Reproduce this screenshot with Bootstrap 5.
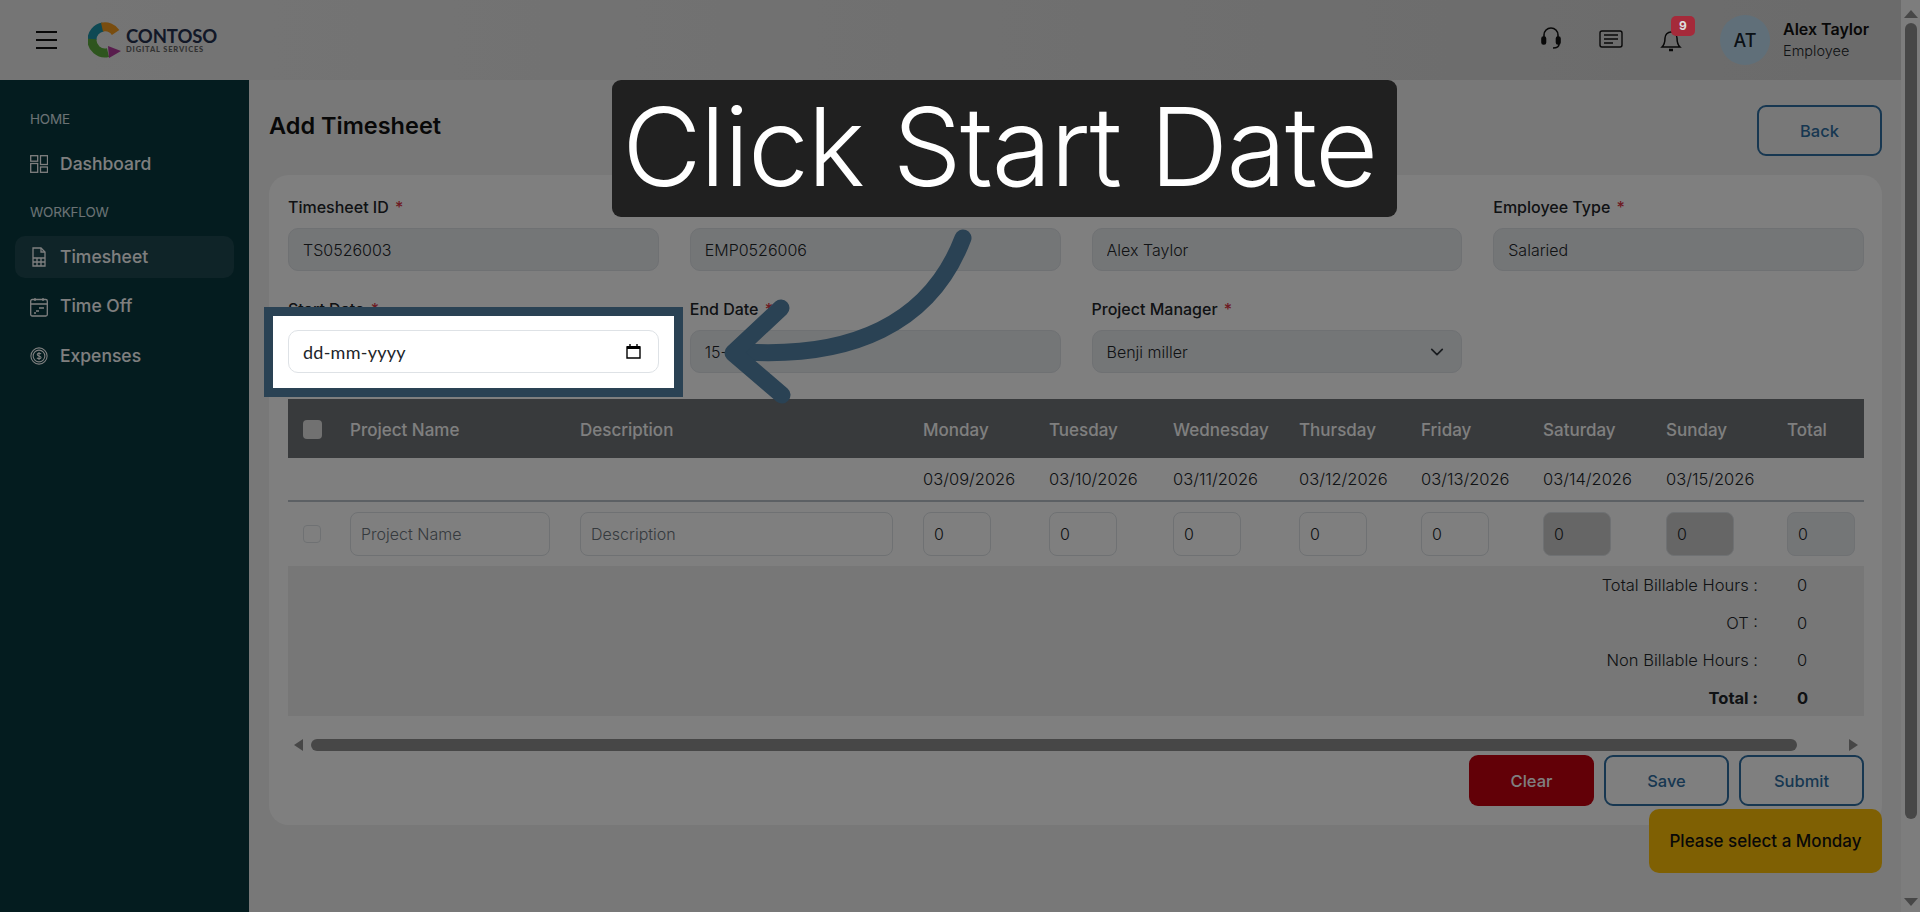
<!DOCTYPE html>
<html lang="en">
<head>
<meta charset="utf-8">
<title>Add Timesheet</title>
<link href="https://cdn.jsdelivr.net/npm/bootstrap@5.3.0/dist/css/bootstrap.min.css" rel="stylesheet">
<style>
html,body{height:912px;overflow:hidden}
body{font-family:"Inter","Noto Sans",sans-serif;font-size:16px;color:#212529;background:#f1f1f1}
.shell{height:912px}
.left-area{width:1901px;flex:none}
.page-scroll{width:19px;flex:none;background:#fafafa;padding-top:10px;padding-bottom:6px}
.tri-up{width:0;height:0;border-left:7px solid transparent;border-right:7px solid transparent;border-bottom:8px solid #8f8f8f}
.tri-down{width:0;height:0;border-left:7px solid transparent;border-right:7px solid transparent;border-top:8px solid #8f8f8f}
.tri-left{width:0;height:0;border-top:6px solid transparent;border-bottom:6px solid transparent;border-right:9px solid #8f8f8f}
.tri-right{width:0;height:0;border-top:6px solid transparent;border-bottom:6px solid transparent;border-left:9px solid #8f8f8f}
.v-thumb{width:12px;height:796px;margin-top:5px;background:#8f8f8f;border-radius:6px}
.topbar{height:80px;background:linear-gradient(90deg,#ebebeb,#d6d6d6);padding:0 0 0 36px}
.burger{width:21px;height:18px;border-top:2px solid #111;border-bottom:2px solid #111;position:relative;margin-right:31px}
.burger::after{content:"";position:absolute;left:0;right:0;top:6px;height:2px;background:#111}
.brand-main{font-family:"Lato",sans-serif;font-size:18.500px;font-weight:700;color:#24304f;line-height:18px;margin-top:1px;letter-spacing:-.1px}
.brand-sub{font-family:"Lato",sans-serif;font-size:7.500px;font-weight:900;color:#666;letter-spacing:.85px;line-height:10px}
.logo-mark{width:34px;height:36px;flex:none;margin-right:4px}
.tool-ico{width:30px;height:30px;color:#111;display:block}
.tool-gap{margin-left:30px}
.bell-badge{top:-9px;left:15px;background:#a52a3a;color:#ddd;font-size:12px;font-weight:700;width:24px;height:20px;border-radius:5px;line-height:20px;text-align:center;z-index:1041}
.avatar{width:50px;height:50px;flex:none;background:#c0dff3;color:#16222c;font-size:18px;font-weight:500;margin-left:34px}
.who{width:118px;margin-left:13px}
.who-name{font-size:16px;font-weight:600;line-height:22px;color:#111;margin-top:-1px}
.who-role{font-size:14.500px;line-height:22px;color:#212529;font-weight:300}
.side{width:249px;flex:none;background:#08383e;color:#fff;padding:20px 15px}
.side-head{font-size:13.500px;color:#d8e4e8;padding-left:15px;line-height:34px;margin:2px 0 7px;font-weight:400;text-transform:uppercase;letter-spacing:-.2px}
.side-link{display:flex;align-items:center;gap:12px;height:42px;padding-left:15px;margin-bottom:7.500px;color:#fff;text-decoration:none;font-size:17.500px;font-weight:500;border-radius:10px}
.side-link.before-group{margin-bottom:10px}
.side-link.is-on{background:#1e4850}
.side-link svg{width:18px;height:20px;flex:none}
.main-area{padding:0 19px 0 20px;position:relative;min-width:0}
.title-row{height:95px;padding-top:25px}
.page-title{font-size:23.500px;font-weight:600;color:#111;margin:7px 0 0}
.btn-line{width:125px;height:51px;border:2px solid #2f6fa3;color:#2f6fa3;background:transparent;border-radius:9px;font-size:16.500px;font-weight:500;padding:2px 0 0}
.btn-clear{width:125px;height:51px;border:0;background:#c4000f;color:#fff;border-radius:9px;font-size:16.500px;font-weight:500;padding:2px 0 0}
.sheet{background:#fff;border-radius:20px;padding:20px 18px 19px 19px;height:650px}
.field-row{--bs-gutter-x:31px;--bs-gutter-y:0}
.field{height:102px}
.f-label{display:block;font-size:16px;font-weight:500;line-height:22px;margin-top:1px;margin-bottom:10px;color:#212529}
.req{color:#dc3545;margin-left:2px}
.f-input{height:43px;border-radius:10px;border:1px solid #dee2e6;font-size:16px;font-weight:300;padding:0 14px;background-color:#fff;color:#212529}
.f-input[readonly]{background:#e9ecef;opacity:1}
.f-input::placeholder{color:#212529;opacity:1}
.cal-ico{position:absolute;right:18px;top:14px;width:15px;height:15px;z-index:1043;color:#000}
.f-select{height:43px;border-radius:10px;border:1px solid #dee2e6;font-size:16px;font-weight:300;padding:0 14px;background-color:#e9ecef;color:#212529;background-position:right 15px center;background-size:18px 14px}
.grid-table{table-layout:fixed;width:1576px;margin:0;border-collapse:collapse}
.grid-table th,.grid-table td{padding:0 0 0 8px;border:0;background:transparent;vertical-align:middle;font-size:16.500px;color:#212529;font-weight:300}
.grid-table thead tr:first-child th{background:#707478;color:#fff;height:59px;font-weight:500;font-size:17px;padding-top:4px}
.grid-table th{white-space:nowrap}
.date-row th{height:43px;border-bottom:2px solid #b9c0c8!important}
.entry-row td{height:65px;padding-top:0}
.box-check{width:18px;height:18px;border-radius:4px;border:1px solid #dee2e6;background:#fff;display:block;margin-left:7px}
.head-check{width:19px;height:19px;border-radius:4px;background:#e3e3e3;display:block;margin-left:7px;margin-top:-3px}
.cell-input{height:44px;border:1px solid #dee2e6;border-radius:8px;background:#fff;font-size:16px;font-weight:300;padding:0 10px;color:#212529;display:block}
.w-day{width:68px}.w-proj{width:200px}.w-desc{width:313px}
.cell-input::placeholder{color:#6c757d;opacity:1}
.off{background:#ccc}.lock{background:#e9ecef}
.summary{height:150px;background:#eee;padding-top:1px}
.sum-line{height:37.500px;display:grid;grid-template-columns:1fr 39px 67px;align-items:center;font-size:16.500px;font-weight:300;text-align:right}
.sum-line span:nth-child(1){grid-column:1}
.sum-line span:nth-child(2){grid-column:3;text-align:left}
.sum-strong{font-weight:700}
.hbar{height:18px;margin-top:20px;padding:0 6px}
.h-thumb{height:12px;width:1486px;margin-left:8px;background:#8f8f8f;border-radius:6px}
.actions{margin-top:1px;gap:10px}
.toast-warn{position:absolute;right:19px;top:729px;width:233px;height:64px;background:#ffc107;border-radius:10px;color:#111;font-size:17px;font-weight:500;padding-top:2px;z-index:5}
.dim{position:fixed;inset:0;background:rgba(0,0,0,.5);z-index:1040}
.frame{position:absolute;left:-24px;right:-24px;top:-23px;bottom:-24px;background:#fff;border:9.500px solid #2a4254;z-index:1041}
.date-wrap{position:relative}
.date-input{position:relative;z-index:1042;background:#fff;font-family:"Lato",sans-serif;font-size:18px;font-weight:400;letter-spacing:.25px}
.callout{position:fixed;left:612px;top:80px;width:785px;height:137px;background:#202020;border-radius:9px;color:#fff;font-family:"Inter",sans-serif;font-size:109px;font-weight:300;z-index:1045;white-space:nowrap;letter-spacing:-1.500px;padding:0 10px 3px 0}
.pointer{position:fixed;left:0;top:0;width:1920px;height:912px;z-index:1044;pointer-events:none}
</style>
</head>
<body>
<div class="shell d-flex">
  <div class="left-area d-flex flex-column">
    <header class="topbar d-flex align-items-center">
      <div class="burger"></div>
      <div class="d-flex align-items-center">
        <svg class="logo-mark" viewBox="0 0 34 36" fill="none" stroke-width="9"><path d="M4 18A13 13 0 0 1 15 5" stroke="#1c93a8"/><path d="M14 5.200A13 13 0 0 1 27.600 10.500" stroke="#f39a1f"/><path d="M4 17A13 13 0 0 0 20 30.600" stroke="#5cab3c"/><path d="M20 24L33 29L21 36Z" fill="#b23a9b"/></svg>
        <div>
          <div class="brand-main">CONTOSO</div>
          <div class="brand-sub">DIGITAL SERVICES</div>
        </div>
      </div>
      <div class="ms-auto d-flex align-items-center">
        <svg class="tool-ico" viewBox="0 2 30 30" fill="none" stroke="currentColor" stroke-width="1.600"><path d="M8 15v-3a7 7 0 0 1 14 0v3"/><rect x="6" y="14" width="3.500" height="7" rx="1.500" fill="currentColor"/><rect x="20.500" y="14" width="3.500" height="7" rx="1.500" fill="currentColor"/><path d="M23 21c0 3-2 4-6 4"/></svg>
        <svg class="tool-ico tool-gap" viewBox="0 1 30 30" fill="none" stroke="currentColor" stroke-width="1.400"><rect x="4" y="7" width="22" height="16" rx="2"/><path d="M8 11h14M8 15h14M8 19h9"/></svg>
        <div class="position-relative tool-gap">
          <svg class="tool-ico" viewBox="0 1 30 30" fill="none" stroke="currentColor" stroke-width="1.500"><path d="M6 23h18c-2.500-2.500-3-5-3-9a6 6 0 0 0-12 0c0 4-.5 6.500-3 9z"/><path d="M13 26h4" stroke-width="2.500"/></svg>
          <span class="bell-badge position-absolute">9</span>
        </div>
        <div class="avatar rounded-circle d-flex align-items-center justify-content-center">AT</div>
        <div class="who">
          <div class="who-name">Alex Taylor</div>
          <div class="who-role">Employee</div>
        </div>
      </div>
    </header>
    <div class="d-flex flex-grow-1">
      <aside class="side">
        <div class="side-head">Home</div>
        <a class="side-link before-group" href="#"><svg viewBox="0 0 18 18" fill="none" stroke="currentColor" stroke-width="1.300"><rect x=".7" y=".7" width="7" height="5.500"/><rect x=".7" y="8.500" width="7" height="8.800"/><rect x="10.500" y=".7" width="7" height="8.800"/><rect x="10.500" y="12" width="7" height="5.300"/></svg>Dashboard</a>
        <div class="side-head">Workflow</div>
        <a class="side-link is-on" href="#"><svg viewBox="0 0 18 20" fill="none" stroke="currentColor" stroke-width="1.300"><path d="M3 1h8l4 4v14H3z"/><path d="M11 1v4h4M3 11h12M3 15h12M7 11v8M11 11v8"/></svg>Timesheet</a>
        <a class="side-link" href="#"><svg viewBox="0 0 18 20" fill="none" stroke="currentColor" stroke-width="1.300"><rect x=".7" y="2.500" width="16.600" height="16.500" rx="1.500"/><path d="M.7 7h16.600M5 1v3M13 1v3M9 11h5M6 14h3M4 16h2"/></svg>Time Off</a>
        <a class="side-link" href="#"><svg viewBox="0 0 20 20" fill="none" stroke="currentColor" stroke-width="1.200"><circle cx="10" cy="10" r="9"/><circle cx="10" cy="10" r="6.500"/><path d="M12.300 7.800c-.6-1-3.800-1.300-4.300.3-.6 2.300 4.500 1.300 4.300 3.700-.2 1.500-3.600 1.500-4.600.2M10 5.500v9"/></svg>Expenses</a>
      </aside>
      <main class="main-area flex-grow-1">
        <div class="title-row d-flex justify-content-between align-items-start">
          <h1 class="page-title">Add Timesheet</h1>
          <button class="btn-line" type="button">Back</button>
        </div>
        <section class="sheet">
          <div class="row field-row">
            <div class="col-3 field"><label class="f-label">Timesheet ID <span class="req">*</span></label><input class="form-control f-input" readonly value="TS0526003"></div>
            <div class="col-3 field"><label class="f-label">Employee Code</label><input class="form-control f-input" readonly value="EMP0526006"></div>
            <div class="col-3 field"><label class="f-label">Employee Name</label><input class="form-control f-input" readonly value="Alex Taylor"></div>
            <div class="col-3 field"><label class="f-label">Employee Type <span class="req">*</span></label><input class="form-control f-input" readonly value="Salaried"></div>
            <div class="col-3 field"><label class="f-label">Start Date <span class="req">*</span></label>
              <div class="date-wrap"><div class="frame"></div><input class="form-control f-input date-input" type="text" placeholder="dd-mm-yyyy"><svg class="cal-ico" viewBox="0 0 15 15" fill="none" stroke="currentColor"><path d="M1 3h13v11H1z" stroke-width="1.400"/><path d="M1 3.500h13" stroke-width="3"/><path d="M4 0v3M11 0v3" stroke-width="1.400"/></svg></div></div>
            <div class="col-3 field"><label class="f-label">End Date <span class="req">*</span></label><input class="form-control f-input" readonly value="15-03-2026"></div>
            <div class="col-3 field"><label class="f-label">Project Manager <span class="req">*</span></label><select class="form-select f-select" disabled><option>Benji miller</option></select></div>
            <div class="col-3 field"></div>
          </div>
          <table class="table grid-table">
            <colgroup><col style="width:54px"><col style="width:230px"><col style="width:343px"><col style="width:126px"><col style="width:124px"><col style="width:126px"><col style="width:122px"><col style="width:122px"><col style="width:123px"><col style="width:121px"><col style="width:85px"></colgroup>
            <thead>
              <tr><th><span class="head-check"></span></th><th>Project Name</th><th>Description</th><th>Monday</th><th>Tuesday</th><th>Wednesday</th><th>Thursday</th><th>Friday</th><th>Saturday</th><th>Sunday</th><th>Total</th></tr>
              <tr class="date-row"><th></th><th></th><th></th><th>03/09/2026</th><th>03/10/2026</th><th>03/11/2026</th><th>03/12/2026</th><th>03/13/2026</th><th>03/14/2026</th><th>03/15/2026</th><th></th></tr>
            </thead>
            <tbody>
              <tr class="entry-row">
                <td><span class="box-check"></span></td>
                <td><input class="cell-input w-proj" placeholder="Project Name"></td>
                <td><input class="cell-input w-desc" placeholder="Description"></td>
                <td><input class="cell-input w-day" value="0"></td>
                <td><input class="cell-input w-day" value="0"></td>
                <td><input class="cell-input w-day" value="0"></td>
                <td><input class="cell-input w-day" value="0"></td>
                <td><input class="cell-input w-day" value="0"></td>
                <td><input class="cell-input w-day off" value="0"></td>
                <td><input class="cell-input w-day off" value="0"></td>
                <td><input class="cell-input w-day lock" value="0"></td>
              </tr>
            </tbody>
          </table>
          <div class="summary">
            <div class="sum-line"><span>Total Billable Hours :</span><span>0</span></div>
            <div class="sum-line"><span>OT :</span><span>0</span></div>
            <div class="sum-line"><span>Non Billable Hours :</span><span>0</span></div>
            <div class="sum-line sum-strong"><span>Total :</span><span>0</span></div>
          </div>
          <div class="hbar d-flex align-items-center"><div class="tri-left"></div><div class="h-thumb"></div><div class="tri-right ms-auto"></div></div>
          <div class="actions d-flex justify-content-end">
            <button class="btn-clear" type="button">Clear</button>
            <button class="btn-line" type="button">Save</button>
            <button class="btn-line" type="button">Submit</button>
          </div>
        </section>
        <div class="toast-warn d-flex align-items-center justify-content-center">Please select a Monday</div>
      </main>
    </div>
  </div>
  <div class="page-scroll d-flex flex-column align-items-center">
    <div class="tri-up"></div>
    <div class="v-thumb"></div>
    <div class="tri-down mt-auto"></div>
  </div>
</div>
<div class="dim"></div>
<svg class="pointer" viewBox="0 0 1920 912" fill="none" stroke="#2a4254" stroke-width="17" stroke-linecap="round" stroke-linejoin="round"><path d="M963 238C930 325 850 358 745 352"/><path d="M781 308L733 353L782 395"/></svg>
<div class="callout d-flex align-items-center justify-content-center">Click Start Date</div>
</body>
</html>
